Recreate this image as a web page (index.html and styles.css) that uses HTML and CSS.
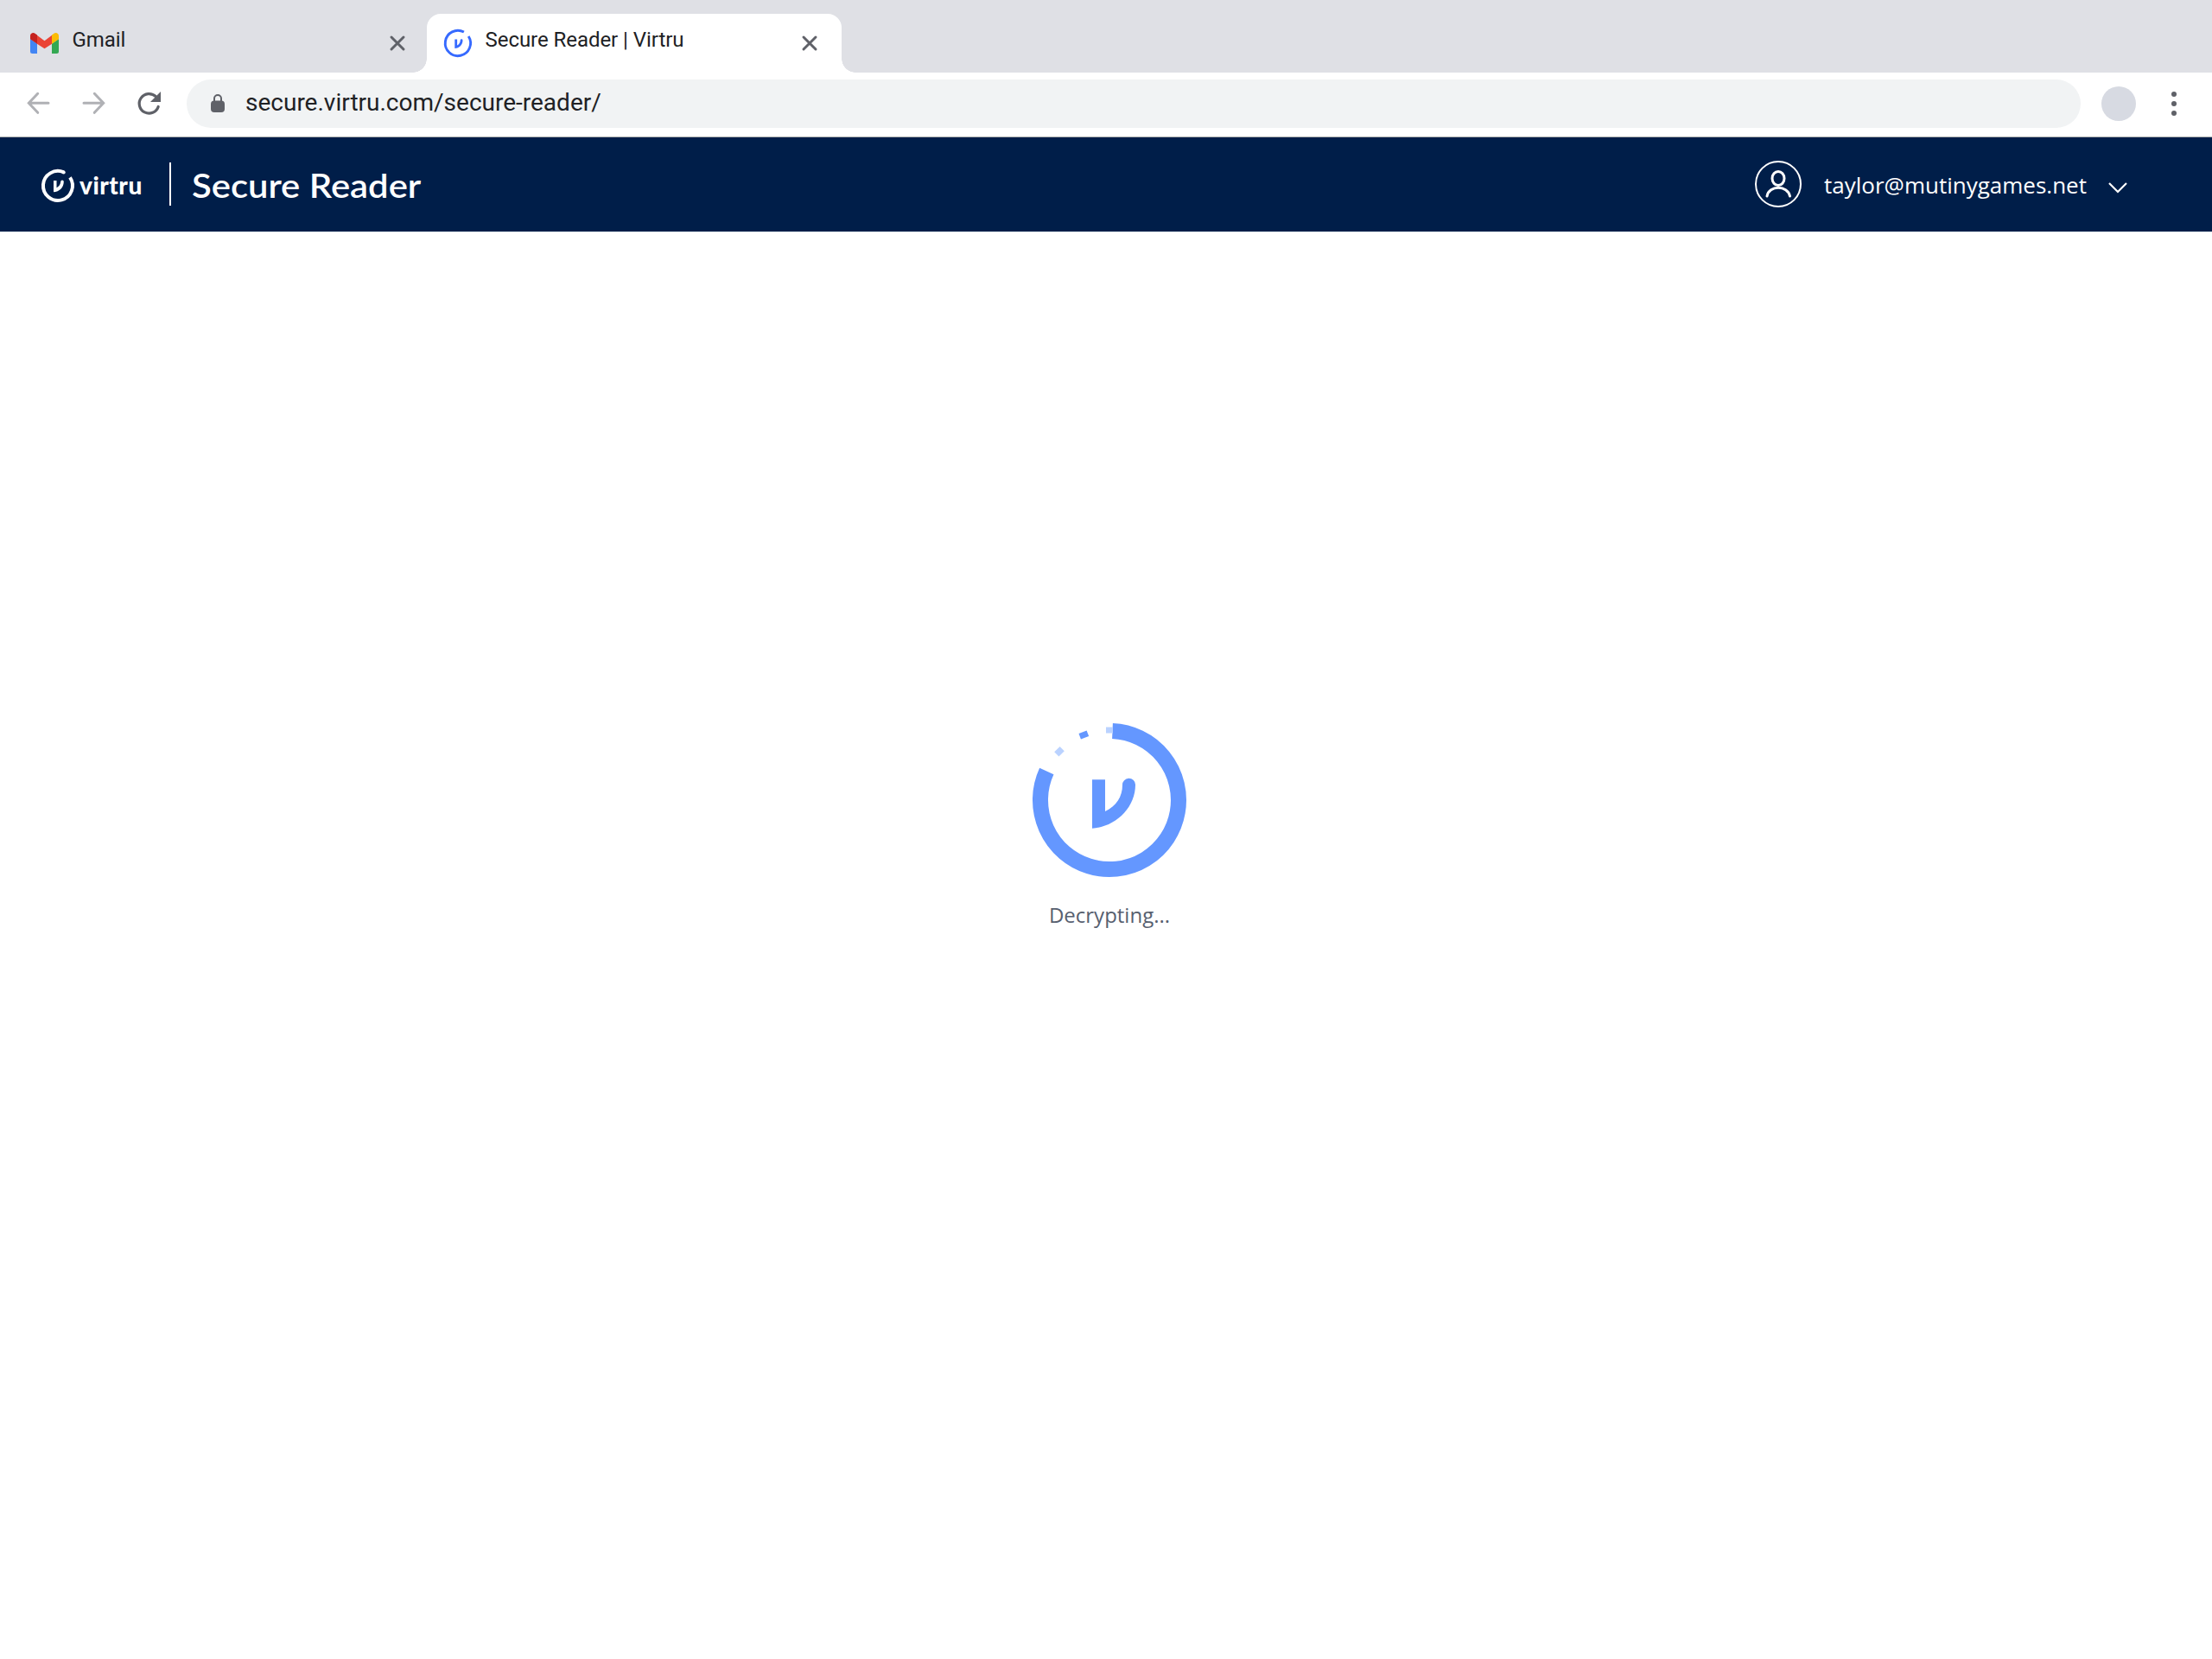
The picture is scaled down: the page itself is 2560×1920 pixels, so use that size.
FILE: index.html
```html
<!DOCTYPE html>
<html lang="en">
<head>
<meta charset="utf-8">
<title>Secure Reader | Virtru</title>
<link rel="stylesheet" href="styles.css">
</head>
<body>
<div class="tabs">
  <div class="tab">
    <svg class="gmail" viewBox="0 0 33 24"><path fill="#4285f4" d="M0 7l8 5.500V24H2.500A2.500 2.500 0 0 1 0 21.500z"/><path fill="#34a853" d="M25 12.500L33 7v14.500a2.500 2.500 0 0 1-2.500 2.500H25z"/><path fill="#ea4335" d="M7.500 2.500L16.500 9.300 25.500 2.500v10L16.500 18.300 7.500 12.500z"/><path fill="#c5221f" d="M0 7.200V3.600C0 .5 3.400-1 5.900.9L8 2.500v10.300z"/><path fill="#fbbc04" d="M33 7.200V3.600C33 .5 29.600-1 27.100.9L25 2.500v10.300z"/></svg>
    <span class="tab-title">Gmail</span>
    <svg class="close" viewBox="0 0 18 18"><path d="M2 2l14 14M16 2L2 16"/></svg>
  </div>
  <div class="tab active">
    <svg class="favicon" viewBox="-16 -16 32 32"><path class="ring" d="M6.900-12.900A14.650 14.650 0 1 0 12.200-8"/><path fill="currentColor" d="M-3.700-4.500H-.9V2.500C1.400 1.200 2.700-1 2.700-3.300A1.400 1.400 0 0 1 5.500-3.300C5.500 1.800 1.600 5.700-3.700 6z"/></svg>
    <span class="tab-title">Secure Reader | Virtru</span>
    <svg class="close" viewBox="0 0 18 18"><path d="M2 2l14 14M16 2L2 16"/></svg>
  </div>
</div>
<div class="toolbar">
  <svg class="nav dim" viewBox="0 0 28 28"><path d="M25 13.300H2.300M12.700 2.300L2.300 13.300l10.400 11"/></svg>
  <svg class="nav dim" viewBox="0 0 28 28"><path d="M2 13.300h22.700M14.300 2.300l10.400 11-10.400 11"/></svg>
  <svg class="nav reload" viewBox="0 0 28 28"><path d="M21.300 5.700A11.300 11.300 0 1 0 24.200 17.500"/><path class="tip" d="M27 0v12H15z"/></svg>
  <div class="address">
    <svg class="lock" viewBox="0 0 16 21"><rect y="7.500" width="16" height="13.500" rx="4"/><path d="M4 9V5a4 4 0 0 1 8 0v4"/></svg>
    <span class="url">secure.virtru.com/secure-reader/</span>
  </div>
  <div class="profile"></div>
  <svg class="menu" viewBox="0 0 6 28"><circle cx="3" cy="3" r="3"/><circle cx="3" cy="14" r="3"/><circle cx="3" cy="25" r="3"/></svg>
</div>
<header class="header">
  <svg class="mark" viewBox="-19 -19 38 38"><path class="ring" d="M6.800-15.600A17 17 0 1 0 14-9.600"/><circle cx="6.700" cy="-15.600" r="2" fill="currentColor"/><path fill="currentColor" d="M-5-6H-1.500V2.300C1.200.8 3-1.500 3.200-4.800A1.800 1.800 0 0 1 6.800-4.800C6.700 2 1.800 6.800-5 7.200z"/></svg>
  <span class="wordmark">virtru</span>
  <span class="divider"></span>
  <span class="product">Secure Reader</span>
  <div class="account">
    <svg class="user" viewBox="0 0 54 54"><circle cx="27" cy="27" r="26"/><g class="person"><ellipse cx="27" cy="20.500" rx="7" ry="8"/><path d="M14 41C16 28 38 28 40.500 41"/></g></svg>
    <span class="email">taylor@mutinygames.net</span>
    <svg class="chevron" viewBox="0 0 22 12"><path d="M1 1l10 10L21 1"/></svg>
  </div>
</header>
<main class="loading">
  <svg class="spinner" viewBox="-90 -90 180 180"><path class="track" d="M3.500-79.900A80 80 0 1 1-72.700-33.400"/><path class="soft" d="M-4-84.500H4V-77.500H-4z"/><rect class="solid" x="-4.900" y="-3.500" width="9.800" height="7" transform="translate(-29.700-75.600)rotate(-21)"/><rect class="soft" x="-4.500" y="-3.700" width="9" height="7.400" transform="translate(-58-56.300)rotate(-45)"/><path class="solid" d="M-20-23.700H-5V13C8 7 15-4 15-17.500A7.500 7.500 0 0 1 30-18C30 9 7 31-20 32.700z"/></svg>
  <p class="status">Decrypting...</p>
</main>
</body>
</html>
```
FILE: styles.css
```css
* { box-sizing: border-box; }
body { margin: 0; height: 1920px; display: flex; flex-direction: column; background: #fff; color: #202124; font-family: Roboto, sans-serif; overflow: hidden; }
svg { display: block; flex: none; fill: none; overflow: visible; }
.tabs { height: 84px; flex: none; display: flex; padding-top: 16px; background: #dfe0e5; }
.tab { width: 494px; height: 68px; display: flex; align-items: center; padding: 0 25px 0 35px; }
.tab-title { font-size: 24px; line-height: 28px; letter-spacing: -.05px; margin: -8px auto 0 15.5px; white-space: nowrap; }
.gmail { width: 33px; height: 24px; }
.close { width: 18px; height: 18px; stroke: #5f6168; stroke-width: 3; stroke-linecap: round; }
.active { position: relative; width: 480px; padding: 0 28px 0 20px; border-radius: 16px 16px 0 0; background: #fff; }
.active::before, .active::after { content: ""; position: absolute; bottom: 0; width: 16px; height: 16px; }
.active::before { right: 100%; background: radial-gradient(circle at 0 0, transparent 15.5px, #fff 16px); }
.active::after { left: 100%; background: radial-gradient(circle at 100% 0, transparent 15.5px, #fff 16px); }
.favicon { width: 32px; height: 32px; color: #366aff; }
.ring { stroke: currentColor; stroke-width: 2.9; }
.toolbar { height: 75px; flex: none; display: flex; align-items: center; padding: 0 41px 3px 31px; border-bottom: 1px solid #aaa; }
.nav { width: 28px; height: 28px; margin-right: 36px; stroke: #5f6168; stroke-width: 3.2; stroke-linecap: round; }
.dim { stroke: #b0b1b5; stroke-width: 3; }
.reload { margin-right: 29px; }
.tip { fill: #5f6168; stroke: none; }
.address { width: 2192px; height: 56px; display: flex; align-items: center; padding-left: 28px; border-radius: 28px; background: #f1f3f4; }
.lock { width: 16px; height: 21px; fill: #5f6168; }
.lock path { fill: none; stroke: #5f6168; stroke-width: 2; }
.url { margin: -2px 0 0 24px; font-size: 28px; line-height: 34px; }
.profile { width: 40px; height: 40px; margin-left: 24px; border-radius: 50%; background: #d7dae2; }
.menu { width: 6px; height: 28px; margin-left: auto; fill: #5f6168; }
.header { height: 109px; flex: none; display: flex; align-items: center; padding: 0 98px 0 48px; background: #001e49; color: #fff; }
.mark { width: 38px; height: 38px; margin-top: 3px; }
.mark .ring { stroke-width: 4; }
.wordmark { width: 72px; margin: 0 32px 0 6px; font: 900 28px/34px Lato, sans-serif; letter-spacing: .5px; }
.divider { width: 2px; height: 50px; margin: 0 24px 1px 0; background: #fff; }
.product { font: 600 38px/48px Lato, sans-serif; white-space: nowrap; transform: scaleX(1.1); transform-origin: left; }
.account { display: flex; align-items: center; margin-left: auto; }
.user { width: 54px; height: 54px; margin: 0 26px 1px 0; stroke: #fff; stroke-width: 2; }
.person { stroke-width: 3; stroke-linecap: round; }
.email { font: 26px/36px "Open Sans", sans-serif; width: 303px; margin-right: 26px; }
.chevron { width: 22px; height: 12px; margin-top: 7px; stroke: #fff; stroke-width: 2.200; }
.loading { flex: 1; display: flex; flex-direction: column; align-items: center; padding: 568px 0 0 8px; }
.spinner { width: 180px; height: 180px; }
.track { stroke: #6497ff; stroke-width: 18; }
.solid { fill: #6497ff; }
.soft { fill: #bad2ff; }
.status { margin: 26px 0 0; color: #57606f; font: 24px/34px "Open Sans", sans-serif; }
```
